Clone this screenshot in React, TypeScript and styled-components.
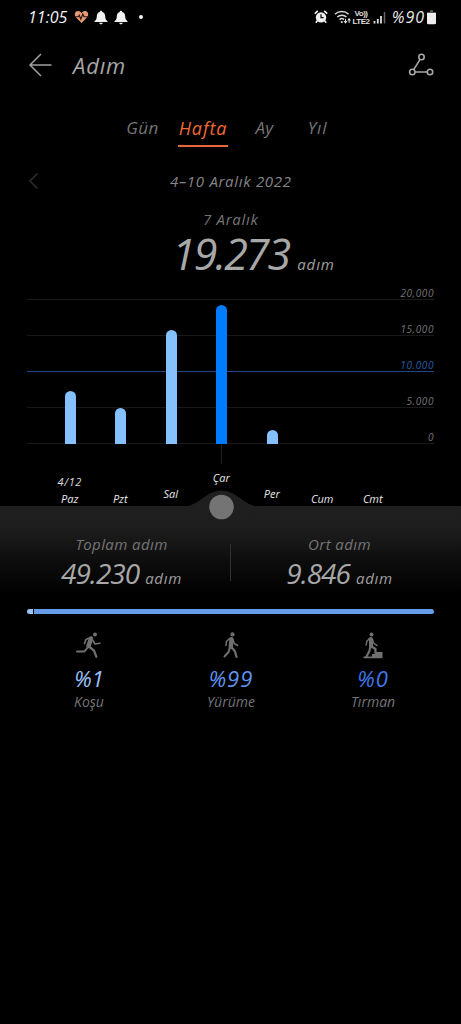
import React from "react"
import styled, { createGlobalStyle } from "styled-components"

const GlobalStyle = createGlobalStyle`
    body {
        margin: 0;
        background: #000;
    }
`

type TextProps = {
    $size: number
    $line: number
    $track?: number
    $color?: string
    $weight?: number
}

const Text = styled.span<TextProps>`
    display: block;
    font-size: ${(p) => p.$size}px;
    line-height: ${(p) => p.$line}px;
    letter-spacing: ${(p) => p.$track ?? 0}px;
    color: ${(p) => p.$color ?? "#757575"};
    font-weight: ${(p) => p.$weight ?? 400};
    white-space: nowrap;
`

const Screen = styled.div`
    width: 461px;
    height: 1024px;
    overflow: hidden;
    background: #000;
    font-family: "Open Sans", "Noto Sans", sans-serif;
    font-style: italic;
`

const StatusBar = styled.div`
    display: flex;
    justify-content: space-between;
    align-items: center;
    box-sizing: border-box;
    height: 34px;
    padding: 0 25px 0 28px;
`

const StatusGroup = styled.div`
    display: flex;
    align-items: center;
`

const Header = styled.header`
    display: flex;
    align-items: center;
    box-sizing: border-box;
    height: 62px;
    padding: 0 27px 0 28px;
`

const HeaderTitle = styled.h1`
    flex: 1;
    margin: 0 0 0 21px;
    font-size: 22px;
    line-height: 28px;
    letter-spacing: 0.8px;
    font-weight: 400;
    color: #a6a6a6;
`

const Tabs = styled.nav`
    display: flex;
    box-sizing: border-box;
    height: 51px;
    padding: 18px 0 0 126px;
`

const Tab = styled.div<{ $active?: boolean; $width: number; $gap: number }>`
    box-sizing: border-box;
    width: ${(p) => p.$width}px;
    height: 33px;
    margin-right: ${(p) => p.$gap}px;
    border-bottom: 2px solid ${(p) => (p.$active ? "#e5683c" : "transparent")};
    text-align: center;
`

const Period = styled.div`
    display: flex;
    align-items: center;
    height: 68px;
    padding-left: 28px;
`

const PeriodLabel = styled.div`
    width: 121px;
    margin-left: 131px;
`

const Selected = styled.section`
    display: flex;
    flex-direction: column;
    height: 84px;
`

const SelectedDay = styled.div`
    padding-left: 203px;
    margin-top: -6px;
`

const SelectedTotal = styled.div`
    display: flex;
    align-items: baseline;
    gap: 8px;
    padding-left: 172px;
`

const Chart = styled.section`
    display: grid;
    grid-template-columns: 407px;
    grid-template-rows: 145px;
    margin-left: 27px;
    height: 145px;
`

const GridLines = styled.div`
    grid-area: 1 / 1;
    display: flex;
    flex-direction: column;
`

const GridLine = styled.div<{ $goal?: boolean }>`
    box-sizing: border-box;
    flex: none;
    display: flex;
    justify-content: flex-end;
    align-items: flex-end;
    height: 36px;
    border-bottom: 1px solid ${(p) => (p.$goal ? "#26428f" : "#191919")};

    &:first-child {
        margin-top: -35px;
    }
`

const Bars = styled.div`
    grid-area: 1 / 1;
    display: grid;
    grid-template-columns: repeat(7, 50.5px);
    align-items: end;
    justify-items: center;
    padding-left: 18px;
`

const Bar = styled.div<{ $selected?: boolean }>`
    width: 11px;
    border-radius: 6px 6px 0 0;
    background: ${(p) => (p.$selected ? "#007dff" : "#85c0ff")};
`

const Days = styled.div`
    display: grid;
    grid-template-columns: repeat(7, 50.5px);
    justify-items: center;
    box-sizing: border-box;
    height: 62px;
    padding-left: 44.5px;
`

const Day = styled.div<{ $raise: number }>`
    display: flex;
    flex-direction: column;
    align-items: center;
    justify-content: flex-end;
    box-sizing: border-box;
    height: 62px;
    padding-bottom: ${(p) => p.$raise}px;
`

const DayTick = styled.div`
    width: 1px;
    height: 20px;
    margin-bottom: auto;
    background: #1d1d1d;
`

const Panel = styled.section`
    position: relative;
    height: 103px;
    background: linear-gradient(#1f1f1f 0, #1d1d1d 24px, #0c0c0c 58px, #000 88px);
`

const Handle = styled.svg`
    position: absolute;
    left: 181px;
    top: -17px;
`

const Totals = styled.div`
    display: grid;
    grid-template-columns: 187px 1px 187px;
    column-gap: 15px;
    padding: 27px 0 0 28px;
`

const Total = styled.div`
    display: flex;
    flex-direction: column;
    align-items: center;
`

const TotalValue = styled.div`
    display: flex;
    align-items: baseline;
    gap: 6px;
`

const Divider = styled.div`
    height: 37px;
    margin-top: 11px;
    background: #303030;
`

const Share = styled.div`
    display: flex;
    gap: 1px;
    width: 407px;
    margin-left: 27px;
`

const ShareRun = styled.div`
    width: 6px;
    height: 5px;
    border-radius: 3px 0 0 3px;
    background: #9dc3f2;
`

const ShareWalk = styled.div`
    flex: 1;
    height: 5px;
    border-radius: 0 3px 3px 0;
    background: #659ce8;
`

const Activities = styled.div`
    display: grid;
    grid-template-columns: repeat(3, 142px);
    padding: 17px 0 0 18px;
`

const Activity = styled.div`
    display: flex;
    flex-direction: column;
    align-items: center;
`

const ActivityShare = styled.div`
    margin: 4px 0 0;
`

const Bell = () => (
    <svg width="14" height="15" viewBox="0 0 14 15" fill="#f2f2f2">
        <path d="M7 .8c.8 0 1.2.5 1.2 1.2 2 .6 2.9 2.1 3 4.3.1 2.600.6 3.700 2.300 4.900v.9H.5v-.9c1.700-1.200 2.200-2.300 2.300-4.900.1-2.200 1-3.700 3-4.300C5.800 1.300 6.200.8 7 .8zM5.300 12.700h3.400c-.2 1-.8 1.500-1.700 1.500s-1.500-.5-1.700-1.500z" />
    </svg>
)

const HeartIcon = styled.svg`
    margin: 0 5px 0 7px;
`

const Heart = () => (
    <HeartIcon width="15" height="14" viewBox="0 0 15 14">
        <path
            d="M7.500 13 2 7.600C-.3 5.200.8 1 4 1c1.600 0 2.800.8 3.500 2C8.200 1.800 9.400 1 11 1c3.200 0 4.300 4.200 2 6.600z"
            fill="#e59a75"
        />
        <path d="M0 6.800h4.300l1-1.600 1.500 4 2-5.200 1.200 2.800h5" fill="none" stroke="#2a140c" strokeWidth="1.100" />
    </HeartIcon>
)

const Dot = styled.div`
    width: 4px;
    height: 4px;
    margin-left: 11px;
    border-radius: 50%;
    background: #f2f2f2;
`

const SecondBell = styled.div`
    display: flex;
    margin-left: 6px;
`

const Alarm = () => (
    <svg width="14" height="14" viewBox="0 0 14 14">
        <path d="M.8 3.600 3.800.9M13.200 3.600 10.200.9" stroke="#eee" strokeWidth="1.700" />
        <path d="m3.500 10.500-1.700 2.300M10.500 10.500l1.700 2.300" stroke="#eee" strokeWidth="1.600" />
        <circle cx="7" cy="7.400" r="5.200" fill="#eee" />
        <path d="M7 4.300v3.300h2.600" fill="none" stroke="#000" strokeWidth="1.200" />
    </svg>
)

const NetworkIcon = styled.svg`
    margin: 0 5px 0 6px;
`

// wifi, VoLTE label and signal bars share one baseline
const Network = () => (
    <NetworkIcon width="53" height="18" viewBox="0 0 53 18" fill="none">
        <g stroke="#d5d5d5" strokeWidth="1.500">
            <path d="M1 6.200c3.600-3.600 10-3.600 13.600 0" />
            <path d="M3.300 9c2.600-2.500 6.700-2.500 9.100 0" />
            <path d="M5.600 11.600c1.300-1.200 3.100-1.200 4.400 0" />
        </g>
        <circle cx="7.800" cy="14" r="1.100" fill="#ddd" />
        <path d="M9.500 13h4l-2 2.800zM13.300 12.500h3.600l-1.800-2.700z" fill="#ddd" />
        <path d="M11.500 10.800V14M15.100 12v3" stroke="#ddd" strokeWidth="1" />
        <g
            fill="#ddd"
            fontFamily="Liberation Sans, sans-serif"
            fontStyle="normal"
            fontWeight="700"
            fontSize="8"
        >
            <text x="20.500" y="8" textLength="13.500">
                Vo))
            </text>
            <text x="18.500" y="15.500" textLength="17.500">
                LTE2
            </text>
        </g>
        <path d="M40.500 13v2.500M43.800 11v4.500M47 8v7.500" stroke="#ddd" strokeWidth="1.800" />
        <path d="M50.500 4v11.500" stroke="#666" strokeWidth="1.500" />
    </NetworkIcon>
)

const BatteryIcon = styled.svg`
    margin-left: 2px;
`

const Battery = () => (
    <BatteryIcon width="9" height="15" viewBox="0 0 9 15">
        <path d="M3 0h3v2h2q1 0 1 1H0q0-1 1-1h2z" fill="#555" />
        <path d="M0 3h9v10q0 1.200-1.200 1.200H1.200Q0 14.200 0 13z" fill="#eee" />
    </BatteryIcon>
)

const Back = () => (
    <svg width="24" height="24" viewBox="0 0 24 24" fill="none" stroke="#a0a0a0" strokeWidth="1.500">
        <path d="M13 1 2 12l11 11M2 12h21.500" />
    </svg>
)

const Route = () => (
    <svg width="26" height="24" viewBox="0 0 26 24" fill="none" stroke="#a8a8a8" strokeWidth="1.600">
        <circle cx="13.500" cy="4" r="2.700" />
        <circle cx="4.300" cy="19" r="2.700" />
        <circle cx="22" cy="19" r="2.700" />
        <path d="M12.100 6.400 5.700 16.700M7 19h12.300" />
    </svg>
)

const Chevron = () => (
    <svg width="11" height="18" viewBox="0 0 11 18" fill="none" stroke="#2b2b2b" strokeWidth="1.600">
        <path d="M9.500 1.500 2 9l7.500 7.500" />
    </svg>
)

const RunIcon = () => (
    <svg width="28" height="28" viewBox="0 0 28 28" fill="none" stroke="#707070" strokeLinecap="round" strokeLinejoin="round">
        <circle cx="20" cy="3.600" r="2" fill="#707070" stroke="none" />
        <path d="M16 7.500 13.500 15" strokeWidth="4.500" />
        <path d="M15.500 6.500 11 8.500 9.500 12.500" strokeWidth="1.700" />
        <path d="m17.500 9 2.500 4 5-.7" strokeWidth="1.600" />
        <path d="M13 16 9.500 20.500H2" strokeWidth="2" />
        <path d="m14 15.500 5 4.200 2.300 6" strokeWidth="2.300" />
    </svg>
)

const WalkIcon = () => (
    <svg width="28" height="28" viewBox="0 0 28 28" fill="none" stroke="#707070" strokeLinecap="round" strokeLinejoin="round">
        <circle cx="15.500" cy="3.400" r="2.100" fill="#707070" stroke="none" />
        <path d="m14.500 8-.8 8" strokeWidth="4.200" />
        <path d="m12.500 7.500-3 3-.5 4" strokeWidth="1.500" />
        <path d="m16 8.500 1.300 4 3.200 2" strokeWidth="1.500" />
        <path d="m13 16-1.500 5-4 4.500" strokeWidth="2" />
        <path d="m14.500 16 3.500 4.500 1.500 5.500" strokeWidth="2.200" />
    </svg>
)

const ClimbIcon = () => (
    <svg width="28" height="28" viewBox="0 0 28 28" fill="none" stroke="#707070" strokeLinecap="round" strokeLinejoin="round">
        <circle cx="12.500" cy="3.500" r="2" fill="#707070" stroke="none" />
        <path d="M12 8v7" strokeWidth="4" />
        <path d="m10.500 7.500-2.800 3-.5 3.500" strokeWidth="1.500" />
        <path d="m13.500 8.500 1 3.500 3.500 2.500" strokeWidth="1.500" />
        <path d="m11.500 15.500-1.300 5-3 5.500" strokeWidth="2.200" />
        <path d="m12.500 15.500 4 2.500v4" strokeWidth="2.200" />
        <path d="M4.500 25.500h8.500v-2.500h4V21h6.500v6.300h-19z" fill="#707070" stroke="none" />
    </svg>
)

const scale = ["20,000", "15,000", "10.000", "5.000", "0"]

const days = [
    { name: "Paz", height: 53, raise: 0, date: "4/12" },
    { name: "Pzt", height: 36, raise: 0 },
    { name: "Sal", height: 114, raise: 5 },
    { name: "Çar", height: 139, raise: 21, selected: true },
    { name: "Per", height: 14, raise: 5 },
    { name: "Cum", height: 0, raise: 0 },
    { name: "Cmt", height: 0, raise: 0 },
]

const App: React.FC = () => {
    return (
        <>
            <GlobalStyle />
            <Screen>
                <StatusBar>
                    <StatusGroup>
                        <Text $size={16} $line={20} $track={0} $color="#f2f2f2">
                            11:05
                        </Text>
                        <Heart />
                        <Bell />
                        <SecondBell>
                            <Bell />
                        </SecondBell>
                        <Dot />
                    </StatusGroup>
                    <StatusGroup>
                        <Alarm />
                        <Network />
                        <Text $size={16} $line={20} $track={1} $color="#e8e8e8">
                            %90
                        </Text>
                        <Battery />
                    </StatusGroup>
                </StatusBar>
                <Header>
                    <Back />
                    <HeaderTitle>Adım</HeaderTitle>
                    <Route />
                </Header>
                <Tabs>
                    <Tab $width={33} $gap={19}>
                        <Text $size={17} $line={28} $track={0.4}>
                            Gün
                        </Text>
                    </Tab>
                    <Tab $width={50} $gap={26} $active>
                        <Text $size={18} $line={28} $track={0.9} $color="#f06a35" $weight={500}>
                            Hafta
                        </Text>
                    </Tab>
                    <Tab $width={21} $gap={32}>
                        <Text $size={17} $line={28} $track={0.4}>
                            Ay
                        </Text>
                    </Tab>
                    <Tab $width={21} $gap={0}>
                        <Text $size={17} $line={28} $track={0.8}>
                            Yıl
                        </Text>
                    </Tab>
                </Tabs>
                <Period>
                    <Chevron />
                    <PeriodLabel>
                        <Text $size={15} $line={20} $track={0.7} $color="#858585">
                            4–10 Aralık 2022
                        </Text>
                    </PeriodLabel>
                </Period>
                <Selected>
                    <SelectedDay>
                        <Text $size={15} $line={20} $track={0.7}>
                            7 Aralık
                        </Text>
                    </SelectedDay>
                    <SelectedTotal>
                        <Text $size={43} $line={50} $track={-2} $color="#a8a8a8" $weight={500}>
                            19.273
                        </Text>
                        <Text $size={15} $line={20} $track={0.9} $color="#a0a0a0">
                            adım
                        </Text>
                    </SelectedTotal>
                </Selected>
                <Chart>
                    <GridLines>
                        {scale.map((value) => (
                            <GridLine key={value} $goal={value === "10.000"}>
                                <Text $size={10} $line={12} $track={0.6} $color={value === "10.000" ? "#2a5ea8" : "#757575"}>
                                    {value}
                                </Text>
                            </GridLine>
                        ))}
                    </GridLines>
                    <Bars>
                        {days.map((day) => (
                            <Bar key={day.name} $selected={day.selected} style={{ height: day.height }} />
                        ))}
                    </Bars>
                </Chart>
                <Days>
                    {days.map((day) => (
                        <Day key={day.name} $raise={day.raise}>
                            {day.selected && <DayTick />}
                            {day.date && (
                                <Text $size={11} $line={20} $track={0.6} $color="#ddd">
                                    {day.date}
                                </Text>
                            )}
                            <Text $size={11} $line={14} $color="#e8e8e8">
                                {day.name}
                            </Text>
                        </Day>
                    ))}
                </Days>
                <Panel>
                    <Handle width="81" height="32" viewBox="0 0 81 32">
                        <path d="M3 17.500C18 17 25 1.500 40.500 1.500S63 17 78 17.500z" fill="#1f1f1f" />
                        <circle cx="40.500" cy="18" r="12.300" fill="#747474" />
                    </Handle>
                    <Totals>
                        <Total>
                            <Text $size={15} $line={22} $track={0.4}>
                                Toplam adım
                            </Text>
                            <TotalValue>
                                <Text $size={28} $line={36} $track={-1} $color="#a8a8a8">
                                    49.230
                                </Text>
                                <Text $size={15} $line={20} $track={0.7} $color="#a0a0a0">
                                    adım
                                </Text>
                            </TotalValue>
                        </Total>
                        <Divider />
                        <Total>
                            <Text $size={15} $line={22} $track={0.4}>
                                Ort adım
                            </Text>
                            <TotalValue>
                                <Text $size={28} $line={36} $track={-1} $color="#a8a8a8">
                                    9.846
                                </Text>
                                <Text $size={15} $line={20} $track={0.7} $color="#a0a0a0">
                                    adım
                                </Text>
                            </TotalValue>
                        </Total>
                    </Totals>
                </Panel>
                <Share>
                    <ShareRun />
                    <ShareWalk />
                </Share>
                <Activities>
                    <Activity>
                        <RunIcon />
                        <ActivityShare>
                            <Text $size={22} $line={30} $color="#9cc0fa">
                                %1
                            </Text>
                        </ActivityShare>
                        <Text $size={14} $line={18}>
                            Koşu
                        </Text>
                    </Activity>
                    <Activity>
                        <WalkIcon />
                        <ActivityShare>
                            <Text $size={22} $line={30} $track={1} $color="#6093f0">
                                %99
                            </Text>
                        </ActivityShare>
                        <Text $size={14} $line={18}>
                            Yürüme
                        </Text>
                    </Activity>
                    <Activity>
                        <ClimbIcon />
                        <ActivityShare>
                            <Text $size={22} $line={30} $track={1} $color="#3f76ea">
                                %0
                            </Text>
                        </ActivityShare>
                        <Text $size={14} $line={18}>
                            Tırman
                        </Text>
                    </Activity>
                </Activities>
            </Screen>
        </>
    )
}

export default App
